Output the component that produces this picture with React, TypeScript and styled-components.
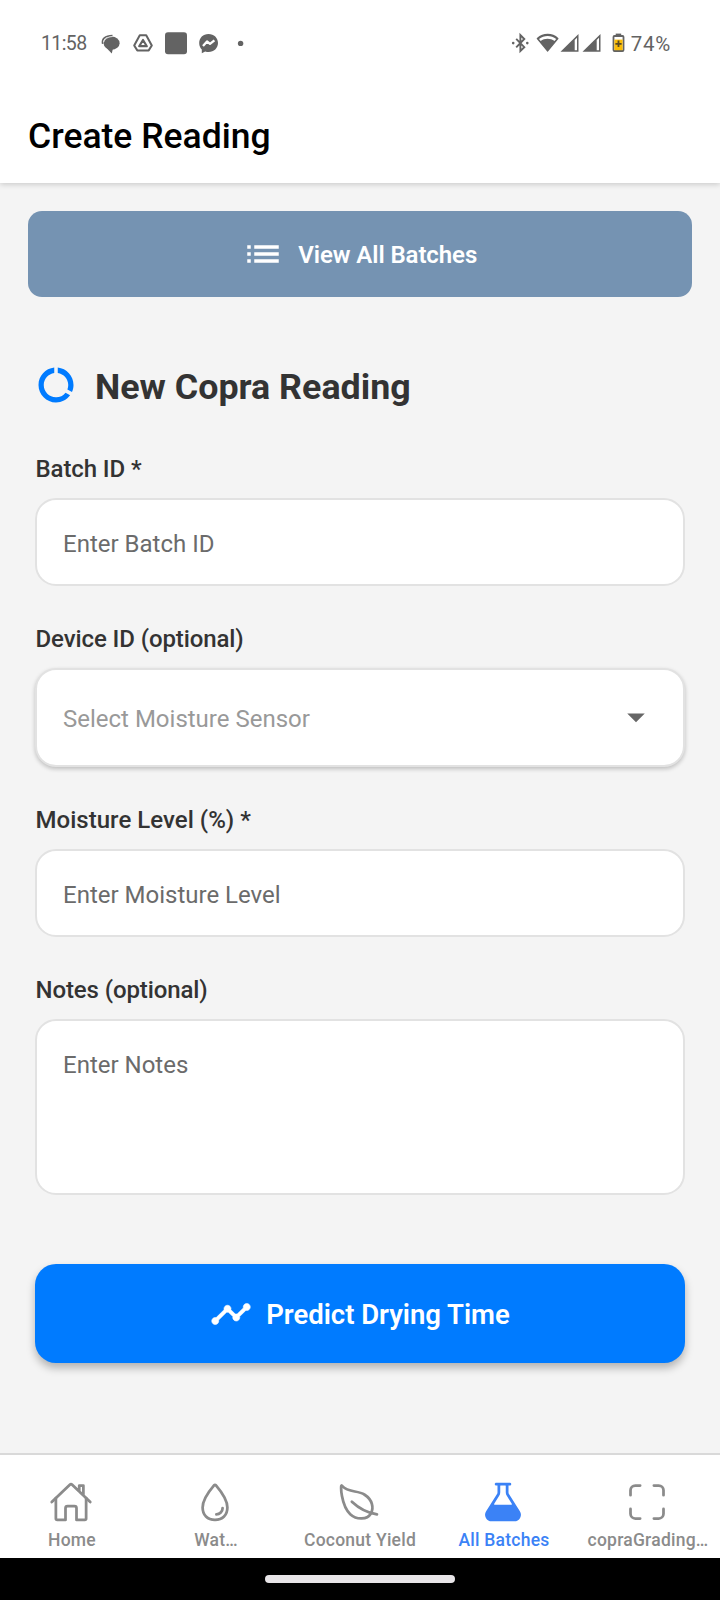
import React from 'react';
import styled, { createGlobalStyle } from 'styled-components';
import { IoHomeOutline, IoWaterOutline, IoLeafOutline, IoFlask, IoScanOutline } from 'react-icons/io5';
import { MdList, MdDataUsage, MdTimeline, MdArrowDropDown } from 'react-icons/md';

const GlobalStyle = createGlobalStyle`
  * { box-sizing: border-box; }
  body { margin: 0; background: #f4f4f4; font-family: Roboto, "Liberation Sans", sans-serif; }
  svg { display: block; flex: none; }
`;

const Screen = styled.div`
  width: 720px;
  height: 1600px;
  display: flex;
  flex-direction: column;
  background: #f4f4f4;
  overflow: hidden;
`;

const TopArea = styled.div`
  flex: none;
  height: 183px;
  background: #fff;
  box-shadow: 0 1px 6px rgba(0, 0, 0, 0.2);
`;

const StatusBar = styled.div`
  height: 87px;
  padding: 0 49px 0 41px;
  display: flex;
  align-items: center;
  justify-content: space-between;
  color: #636363;
  line-height: 24px;
`;

const StatusGroup = styled.div`
  display: flex;
  align-items: center;
  gap: 2px;
`;

const StatusText = styled.span<{ $size: number; $spacing: string; $width?: number }>`
  width: ${(p) => (p.$width ? `${p.$width}px` : 'auto')};
  padding-top: 1px;
  font-size: ${(p) => p.$size}px;
  letter-spacing: ${(p) => p.$spacing};
`;

const ScreenTitle = styled.h1`
  margin: 0;
  padding: 28px 28px 0;
  font-size: 35.5px;
  font-weight: 500;
  line-height: 42px;
  color: #000;
`;

const Content = styled.main`
  flex: 1;
  padding: 28px 28px 0;
`;

const BatchesButton = styled.div`
  height: 86px;
  padding-right: 1px;
  border-radius: 14px;
  background: #7593b2;
  color: #fff;
  display: flex;
  align-items: center;
  justify-content: center;
  gap: 14.5px;
`;

const ButtonText = styled.span<{ $size: number; $spacing: string }>`
  padding-top: 2px;
  font-size: ${(p) => p.$size}px;
  font-weight: 600;
  line-height: 34px;
  letter-spacing: ${(p) => p.$spacing};
`;

const Form = styled.section`
  padding: 65px 7px 0;
`;

const FormHeading = styled.div`
  display: flex;
  align-items: center;
  gap: 18px;
  height: 46px;
  margin-bottom: 45px;
  color: #007bff;
`;

const HeadingText = styled.h2`
  margin: 3px 0 0;
  font-size: 35.8px;
  font-weight: 700;
  line-height: 42px;
  color: #333;
`;

const Field = styled.div`
  margin-bottom: 37px;
`;

const Label = styled.div<{ $tight?: boolean }>`
  margin-bottom: 13px;
  padding-left: 0.5px;
  font-size: 24px;
  font-weight: 500;
  line-height: 32px;
  letter-spacing: ${(p) => (p.$tight ? '-0.1px' : '0.03px')};
  color: #333;
`;

const Control = styled.div<{ $height: number; $raised?: boolean; $muted?: boolean }>`
  height: ${(p) => p.$height}px;
  padding: ${(p) => (p.$raised ? 33 : 28)}px 26px 0;
  border: 2px solid #e2e2e2;
  border-radius: 21px;
  background: #fff;
  box-shadow: ${(p) => (p.$raised ? '0 2px 4px rgba(0, 0, 0, 0.22)' : 'none')};
  display: flex;
  justify-content: space-between;
  font-size: 24px;
  line-height: 32px;
  color: ${(p) => (p.$muted ? '#999' : '#6b6b6b')};
`;

const SelectArrow = styled.span`
  display: flex;
  height: 28px;
  align-items: center;
  color: #666;
`;

const SubmitButton = styled.div`
  height: 99px;
  margin-top: 69px;
  border-radius: 21px;
  background: #007bff;
  box-shadow: 0 5px 9px rgba(0, 0, 0, 0.27);
  color: #fff;
  display: flex;
  align-items: center;
  justify-content: center;
  gap: 14px;
`;

const TrendIcon = styled(MdTimeline)`
  path {
    stroke: currentColor;
    stroke-width: 0.35px;
  }

  path[fill='none'] { stroke: none; }
`;

const TabBar = styled.nav`
  flex: none;
  height: 105px;
  border-top: 2px solid #d9d9d9;
  background: #fff;
  display: grid;
  grid-template-columns: repeat(5, 144px);
`;

const Tab = styled.div<{ $active?: boolean }>`
  display: flex;
  flex-direction: column;
  align-items: center;
  padding-top: 25px;
  gap: 5px;
  font-size: 17.5px;
  font-weight: 500;
  line-height: 22px;
  letter-spacing: 0.24px;
  white-space: nowrap;
  color: ${(p) => (p.$active ? '#3b82f6' : '#8b8b8b')};

  svg { margin-right: 2px; }
`;

const GestureBar = styled.div`
  flex: none;
  height: 42px;
  background: #000;
  display: flex;
  justify-content: center;
  padding-top: 17px;
`;

const GesturePill = styled.div`
  width: 190px;
  height: 8px;
  border-radius: 4px;
  background: #e8e5e8;
`;

const NotificationIcons = () => (
  <svg width="150" height="30" viewBox="0 0 150 30" fill="#636363">
    <ellipse cx="15.6" cy="14.2" rx="8" ry="6.6" />
    <path d="M9.5 18 L15.8 24.6 L17 19 Z" />
    <path d="M6.6 14.8 C5.5 10 9 6.6 16.5 6.4" fill="none" stroke="#636363" strokeWidth="1.5" />
    <path d="M7.8 13 C8.5 9.8 11.5 8.2 16.5 7.5" fill="none" stroke="#fff" strokeWidth="0.7" />
    <path d="M43.8 6.2 L50.2 6.2 L55.8 16.5 L52.7 21.4 L41.3 21.4 L38.2 16.5 Z" fill="none" stroke="#636363" strokeWidth="2" strokeLinejoin="round" />
    <path d="M47 11 L50.8 17.2 L43.2 17.2 Z" fill="none" stroke="#636363" strokeWidth="2.2" strokeLinejoin="round" />
    <rect x="69" y="3.3" width="22" height="22" rx="3" />
    <path d="M112.5 5 C107 5 103.2 8.9 103.2 14 C103.2 16.6 104.1 18.9 105.8 20.5 L105.8 24.2 L109.2 22.4 C116 24.4 122 20.2 122 14 C122 8.9 118 5 112.5 5 Z" />
    <path d="M107 16.9 L111 12.4 L114 14.9 L118.4 11.4" fill="none" stroke="#fff" strokeWidth="2.3" strokeLinejoin="round" />
    <circle cx="144.6" cy="14.4" r="2.7" />
  </svg>
);

const SystemIcons = () => (
  <svg width="118" height="30" viewBox="0 0 118 30" fill="#636363">
    <path d="M5.2 9.9 L13.3 18.2 L9.4 22 L9.4 6 L13.3 10 L5.2 18.3" fill="none" stroke="#636363" strokeWidth="1.9" />
    <circle cx="2.2" cy="14.1" r="1.3" />
    <circle cx="16.3" cy="14.1" r="1.3" />
    <path d="M26.5 9.5 C32.5 4.2 41 4.2 46.7 9.5 L36.6 21.8 Z" stroke="#636363" strokeWidth="1.6" strokeLinejoin="round" />
    <path d="M28 10 C33 6 40.3 6 45.2 10 L43.5 12 C39.5 9 33.5 9 29.7 12 Z" fill="#fff" />
    <path d="M49.5 22.7 L67.5 5 L67.5 22.7 Z M63.7 11 L63.7 21.3 L66 21.3 L66 8.7 Z" fillRule="evenodd" />
    <path d="M71.5 22.7 L89.5 5 L89.5 22.7 Z M85.7 11 L85.7 21.3 L88 21.3 L88 8.7 Z" fillRule="evenodd" />
    <rect x="104.7" y="4.6" width="5.5" height="3" />
    <rect x="102.5" y="7" width="10" height="15" rx="1" fill="#fff" stroke="#636363" strokeWidth="1.8" />
    <rect x="103.4" y="10.6" width="8.2" height="10.6" fill="#fbbc04" />
    <path d="M107.5 11.6 V18.1 M104.4 14.8 H110.6" stroke="#5a4a20" strokeWidth="1.8" />
  </svg>
);

const tabs = [
  { label: 'Home', Icon: IoHomeOutline },
  { label: 'Wat…', Icon: IoWaterOutline },
  { label: 'Coconut Yield', Icon: IoLeafOutline },
  { label: 'All Batches', Icon: IoFlask, active: true },
  { label: 'copraGrading…', Icon: IoScanOutline },
];

export default function App() {
  return (
    <>
      <GlobalStyle />
      <Screen>
        <TopArea>
          <StatusBar>
            <StatusGroup>
              <StatusText $size={19.5} $spacing="-0.6px" $width={53}>11:58</StatusText>
              <NotificationIcons />
            </StatusGroup>
            <StatusGroup>
              <SystemIcons />
              <StatusText $size={20.5} $spacing="0.7px">74%</StatusText>
            </StatusGroup>
          </StatusBar>
          <ScreenTitle>Create Reading</ScreenTitle>
        </TopArea>
        <Content>
          <BatchesButton>
            <MdList size={42} />
            <ButtonText $size={24} $spacing="-0.08px">View All Batches</ButtonText>
          </BatchesButton>
          <Form>
            <FormHeading>
              <MdDataUsage size={42} />
              <HeadingText>New Copra Reading</HeadingText>
            </FormHeading>
            <Field>
              <Label $tight>Batch ID *</Label>
              <Control $height={88}>Enter Batch ID</Control>
            </Field>
            <Field>
              <Label $tight>Device ID (optional)</Label>
              <Control $height={99} $raised $muted>
                <span>Select Moisture Sensor</span>
                <SelectArrow>
                  <MdArrowDropDown size={42} />
                </SelectArrow>
              </Control>
            </Field>
            <Field>
              <Label>Moisture Level (%) *</Label>
              <Control $height={88}>Enter Moisture Level</Control>
            </Field>
            <Field>
              <Label $tight>Notes (optional)</Label>
              <Control $height={176}>Enter Notes</Control>
            </Field>
            <SubmitButton>
              <TrendIcon size={42} />
              <ButtonText $size={27.5} $spacing="-0.02px">Predict Drying Time</ButtonText>
            </SubmitButton>
          </Form>
        </Content>
        <TabBar>
          {tabs.map(({ label, Icon, active }) => (
            <Tab key={label} $active={active}>
              <Icon size={44} />
              <span>{label}</span>
            </Tab>
          ))}
        </TabBar>
        <GestureBar>
          <GesturePill />
        </GestureBar>
      </Screen>
    </>
  );
}
